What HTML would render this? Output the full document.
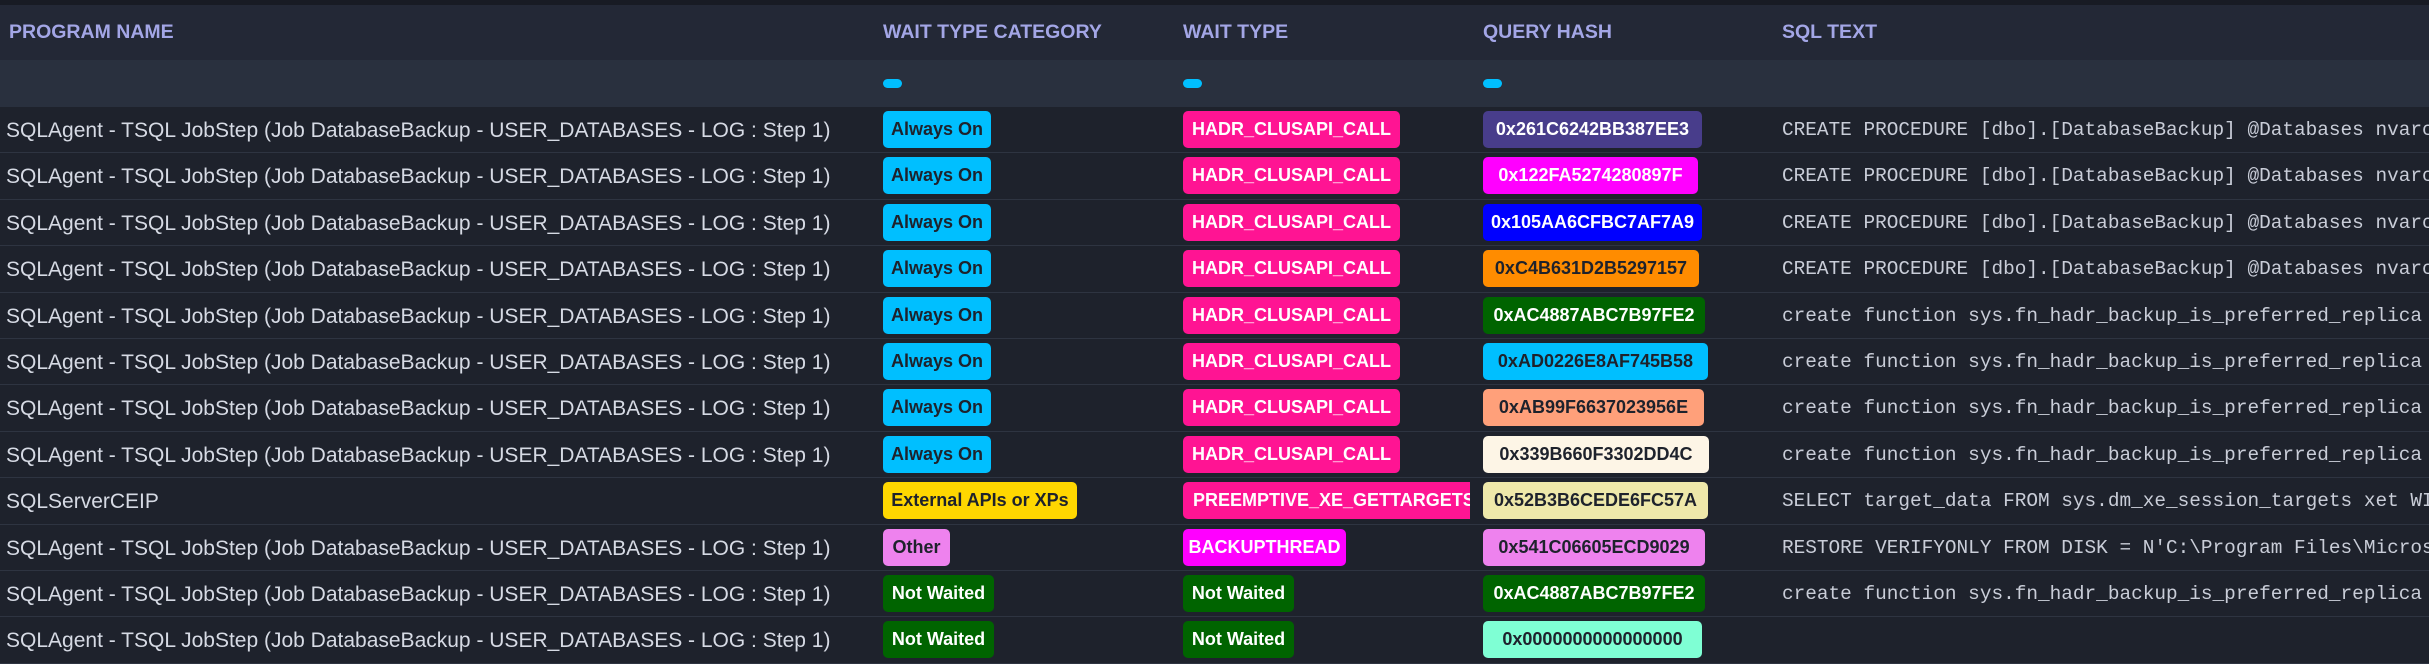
<!DOCTYPE html>
<html><head><meta charset="utf-8"><style>
*{margin:0;padding:0;box-sizing:border-box}
body{width:2429px;height:628px;overflow:hidden;background:#1e222c;font-family:"Liberation Sans",sans-serif;position:relative}
.top{position:absolute;left:0;top:0;width:2429px;height:5px;background:#181b24}
.hdr{position:absolute;left:0;top:5px;width:2429px;height:55px;background:#232836}
.flt{position:absolute;left:0;top:60px;width:2429px;height:47px;background:#29303e}
.h{position:absolute;top:21px;color:#a3a6e6;font-weight:bold;font-size:19.5px;white-space:nowrap}
.dot{position:absolute;top:79px;width:19px;height:9px;border-radius:5px;background:#00bfff}
.row{position:absolute;left:0;width:2429px;height:46.4px;border-bottom:1px solid #2e3441}
.pn{position:absolute;left:6px;top:12px;color:#d6dae4;font-size:21px;white-space:nowrap}
.b{position:absolute;top:4px;height:37px;border-radius:5px;overflow:hidden;display:flex;align-items:center;justify-content:center}
.b span{font-size:18px;font-weight:bold;white-space:nowrap;display:inline-block}
.sql{position:absolute;left:1782px;top:12px;font-family:"Liberation Mono",monospace;font-size:19.4px;color:#c9cdd8;white-space:pre}
.d{color:#1e222c}.w{color:#fff}
</style></head><body>
<div class="top"></div>
<div class="hdr"></div>
<div class="flt"></div>
<div class="h" style="left:9px">PROGRAM NAME</div>
<div class="h" style="left:883px">WAIT TYPE CATEGORY</div>
<div class="h" style="left:1183px">WAIT TYPE</div>
<div class="h" style="left:1483px">QUERY HASH</div>
<div class="h" style="left:1782px">SQL TEXT</div>
<div class="dot" style="left:883px"></div>
<div class="dot" style="left:1183px"></div>
<div class="dot" style="left:1483px"></div>

<div class="row" style="top:107px"><div class="pn">SQLAgent - TSQL JobStep (Job DatabaseBackup - USER_DATABASES - LOG : Step 1)</div>
<div class="b d" style="left:883px;width:108px;background:#00bfff"><span>Always On</span></div>
<div class="b w" style="left:1183px;width:217px;background:#ff1493"><span>HADR_CLUSAPI_CALL</span></div>
<div class="b w" style="left:1483px;width:219px;background:#483d8b"><span>0x261C6242BB387EE3</span></div>
<div class="sql">CREATE PROCEDURE [dbo].[DatabaseBackup] @Databases nvarchar(max)</div></div>

<div class="row" style="top:153.4px"><div class="pn">SQLAgent - TSQL JobStep (Job DatabaseBackup - USER_DATABASES - LOG : Step 1)</div>
<div class="b d" style="left:883px;width:108px;background:#00bfff"><span>Always On</span></div>
<div class="b w" style="left:1183px;width:217px;background:#ff1493"><span>HADR_CLUSAPI_CALL</span></div>
<div class="b w" style="left:1483px;width:215px;background:#ff00ff"><span>0x122FA5274280897F</span></div>
<div class="sql">CREATE PROCEDURE [dbo].[DatabaseBackup] @Databases nvarchar(max)</div></div>

<div class="row" style="top:199.8px"><div class="pn">SQLAgent - TSQL JobStep (Job DatabaseBackup - USER_DATABASES - LOG : Step 1)</div>
<div class="b d" style="left:883px;width:108px;background:#00bfff"><span>Always On</span></div>
<div class="b w" style="left:1183px;width:217px;background:#ff1493"><span>HADR_CLUSAPI_CALL</span></div>
<div class="b w" style="left:1483px;width:219px;background:#0000ff"><span>0x105AA6CFBC7AF7A9</span></div>
<div class="sql">CREATE PROCEDURE [dbo].[DatabaseBackup] @Databases nvarchar(max)</div></div>

<div class="row" style="top:246.2px"><div class="pn">SQLAgent - TSQL JobStep (Job DatabaseBackup - USER_DATABASES - LOG : Step 1)</div>
<div class="b d" style="left:883px;width:108px;background:#00bfff"><span>Always On</span></div>
<div class="b w" style="left:1183px;width:217px;background:#ff1493"><span>HADR_CLUSAPI_CALL</span></div>
<div class="b d" style="left:1483px;width:216px;background:#ff8c00"><span>0xC4B631D2B5297157</span></div>
<div class="sql">CREATE PROCEDURE [dbo].[DatabaseBackup] @Databases nvarchar(max)</div></div>

<div class="row" style="top:292.6px"><div class="pn">SQLAgent - TSQL JobStep (Job DatabaseBackup - USER_DATABASES - LOG : Step 1)</div>
<div class="b d" style="left:883px;width:108px;background:#00bfff"><span>Always On</span></div>
<div class="b w" style="left:1183px;width:217px;background:#ff1493"><span>HADR_CLUSAPI_CALL</span></div>
<div class="b w" style="left:1483px;width:222px;background:#006400"><span>0xAC4887ABC7B97FE2</span></div>
<div class="sql">create function sys.fn_hadr_backup_is_preferred_replica (</div></div>

<div class="row" style="top:339px"><div class="pn">SQLAgent - TSQL JobStep (Job DatabaseBackup - USER_DATABASES - LOG : Step 1)</div>
<div class="b d" style="left:883px;width:108px;background:#00bfff"><span>Always On</span></div>
<div class="b w" style="left:1183px;width:217px;background:#ff1493"><span>HADR_CLUSAPI_CALL</span></div>
<div class="b d" style="left:1483px;width:225px;background:#00bfff"><span>0xAD0226E8AF745B58</span></div>
<div class="sql">create function sys.fn_hadr_backup_is_preferred_replica (</div></div>

<div class="row" style="top:385.4px"><div class="pn">SQLAgent - TSQL JobStep (Job DatabaseBackup - USER_DATABASES - LOG : Step 1)</div>
<div class="b d" style="left:883px;width:108px;background:#00bfff"><span>Always On</span></div>
<div class="b w" style="left:1183px;width:217px;background:#ff1493"><span>HADR_CLUSAPI_CALL</span></div>
<div class="b d" style="left:1483px;width:221px;background:#ffa07a"><span>0xAB99F6637023956E</span></div>
<div class="sql">create function sys.fn_hadr_backup_is_preferred_replica (</div></div>

<div class="row" style="top:431.8px"><div class="pn">SQLAgent - TSQL JobStep (Job DatabaseBackup - USER_DATABASES - LOG : Step 1)</div>
<div class="b d" style="left:883px;width:108px;background:#00bfff"><span>Always On</span></div>
<div class="b w" style="left:1183px;width:217px;background:#ff1493"><span>HADR_CLUSAPI_CALL</span></div>
<div class="b d" style="left:1483px;width:226px;background:#fdf5e6"><span>0x339B660F3302DD4C</span></div>
<div class="sql">create function sys.fn_hadr_backup_is_preferred_replica (</div></div>

<div class="row" style="top:478.2px"><div class="pn">SQLServerCEIP</div>
<div class="b d" style="left:883px;width:194px;background:#ffd700"><span>External APIs or XPs</span></div>
<div class="b w" style="left:1183px;width:287px;background:#ff1493;justify-content:flex-start;padding-left:10px;border-radius:5px 0 0 5px"><span>PREEMPTIVE_XE_GETTARGETSTATE</span></div>
<div class="b d" style="left:1483px;width:225px;background:#eee8aa"><span>0x52B3B6CEDE6FC57A</span></div>
<div class="sql">SELECT target_data FROM sys.dm_xe_session_targets xet WITH(nolock)</div></div>

<div class="row" style="top:524.6px"><div class="pn">SQLAgent - TSQL JobStep (Job DatabaseBackup - USER_DATABASES - LOG : Step 1)</div>
<div class="b d" style="left:883px;width:67px;background:#ee82ee"><span>Other</span></div>
<div class="b w" style="left:1183px;width:163px;background:#ff00ff"><span>BACKUPTHREAD</span></div>
<div class="b d" style="left:1483px;width:222px;background:#ee82ee"><span>0x541C06605ECD9029</span></div>
<div class="sql">RESTORE VERIFYONLY FROM DISK = N'C:\Program Files\Microsoft SQL</div></div>

<div class="row" style="top:571px"><div class="pn">SQLAgent - TSQL JobStep (Job DatabaseBackup - USER_DATABASES - LOG : Step 1)</div>
<div class="b w" style="left:883px;width:111px;background:#006400"><span>Not Waited</span></div>
<div class="b w" style="left:1183px;width:111px;background:#006400"><span>Not Waited</span></div>
<div class="b w" style="left:1483px;width:222px;background:#006400"><span>0xAC4887ABC7B97FE2</span></div>
<div class="sql">create function sys.fn_hadr_backup_is_preferred_replica (</div></div>

<div class="row" style="top:617.4px"><div class="pn">SQLAgent - TSQL JobStep (Job DatabaseBackup - USER_DATABASES - LOG : Step 1)</div>
<div class="b w" style="left:883px;width:111px;background:#006400"><span>Not Waited</span></div>
<div class="b w" style="left:1183px;width:111px;background:#006400"><span>Not Waited</span></div>
<div class="b d" style="left:1483px;width:219px;background:#7fffd4"><span>0x0000000000000000</span></div>
</div>
</body></html>
